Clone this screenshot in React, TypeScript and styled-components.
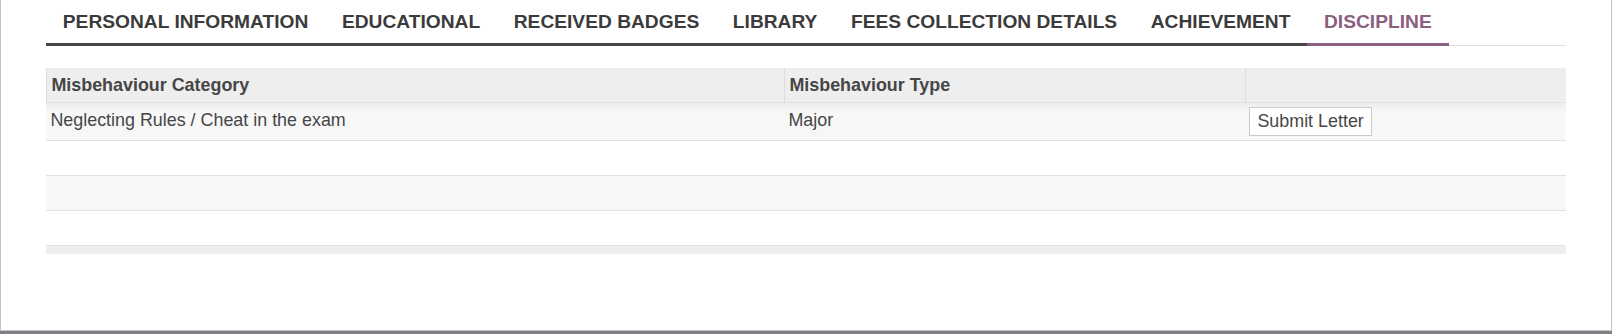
import React from 'react';
import styled, { createGlobalStyle } from 'styled-components';

const GlobalStyle = createGlobalStyle`
  html, body {
    margin: 0;
    padding: 0;
    background: #828282;
  }
  body {
    font-family: 'Liberation Sans', Arial, sans-serif;
  }
`;

const TABS = [
  'Personal Information',
  'Educational',
  'Received Badges',
  'Library',
  'Fees Collection Details',
  'Achievement',
  'Discipline',
];

const ROWS = [
  { category: 'Neglecting Rules / Cheat in the exam', type: 'Major' },
];

// the list always shows at least four lines
const MIN_LINES = 4;

const Frame = styled.div`
  box-sizing: border-box;
  width: 1612px;
  height: 331px;
  background: #fff;
  border: 1px solid #c3c0d3;
  border-top: none;
  padding: 0 45px;
`;

const TabBar = styled.ul`
  display: flex;
  margin: 0;
  padding: 0;
  list-style: none;
  border-bottom: 1px solid #dee0e4;
`;

const Tab = styled.li<{ $active?: boolean }>`
  margin-bottom: -1px;
  padding: 10.5px 16.8px;
  line-height: 22px;
  font-size: 19.2px;
  font-weight: bold;
  text-transform: uppercase;
  white-space: nowrap;
  color: ${({ $active }) => ($active ? '#8a5f80' : '#3b3b3b')};
  border-bottom: 3px solid ${({ $active }) => ($active ? '#8a5f80' : '#454545')};
  cursor: pointer;
`;

const Table = styled.table`
  width: 100%;
  margin-top: 22px;
  border-collapse: separate;
  border-spacing: 0;
  table-layout: fixed;
  font-size: 17.9px;
  color: #464646;
`;

const HeadCell = styled.th<{ $width?: string }>`
  box-sizing: border-box;
  width: ${({ $width }) => $width || 'auto'};
  padding: 3.8px 4.4px 4.2px;
  line-height: 26px;
  text-align: left;
  font-weight: bold;
  background: #eeeeee;
  border-left: 1px solid #dddddd;
  border-bottom: 1px solid #e1e2e6;
  vertical-align: top;
`;

const Row = styled.tr<{ $striped?: boolean; $shaded?: boolean }>`
  background: ${({ $striped }) => ($striped ? '#f7f7f7' : '#ffffff')};

  & > td {
    background-image: ${({ $shaded }) =>
      $shaded ? 'linear-gradient(#ededed, #f7f7f7 9px)' : 'none'};
  }
`;

const Cell = styled.td`
  padding: 3.8px 4.4px 4.2px;
  line-height: 26px;
  vertical-align: top;
  border-bottom: 1px solid #e0e1e5;
  white-space: nowrap;
`;

const FootCell = styled.td`
  height: 8px;
  padding: 0;
  background: #eeeeee;
  line-height: 0;
  font-size: 0;
`;

const LetterButton = styled.button`
  display: inline-block;
  vertical-align: top;
  margin-top: 0.4px;
  height: 29px;
  padding: 0 7px;
  border: 1px solid #cbcbcb;
  border-radius: 0;
  background: #fff;
  color: #464646;
  font-family: 'Liberation Sans', Arial, sans-serif;
  font-size: 17.9px;
  line-height: 27px;
  cursor: pointer;
`;

const App: React.FC = () => {
  const blanks = Math.max(MIN_LINES - ROWS.length, 0);

  return (
    <>
      <GlobalStyle />
      <Frame>
        <TabBar>
          {TABS.map((t) => (
            <Tab key={t} $active={t === 'Discipline'}>
              {t}
            </Tab>
          ))}
        </TabBar>

        <Table>
          <thead>
            <tr>
              <HeadCell $width="738px">Misbehaviour Category</HeadCell>
              <HeadCell $width="461px">Misbehaviour Type</HeadCell>
              <HeadCell />
            </tr>
          </thead>
          <tbody>
            {ROWS.map((r, i) => (
              <Row key={r.category} $striped $shaded={i === 0}>
                <Cell>{r.category}</Cell>
                <Cell>{r.type}</Cell>
                <Cell>
                  <LetterButton type="button">Submit Letter</LetterButton>
                </Cell>
              </Row>
            ))}
            {Array.from({ length: blanks }).map((_, i) => (
              <Row key={i} $striped={(ROWS.length + i) % 2 === 0}>
                <Cell colSpan={3}>&nbsp;</Cell>
              </Row>
            ))}
          </tbody>
          <tfoot>
            <tr>
              <FootCell colSpan={3} />
            </tr>
          </tfoot>
        </Table>
      </Frame>
    </>
  );
};

export default App;
